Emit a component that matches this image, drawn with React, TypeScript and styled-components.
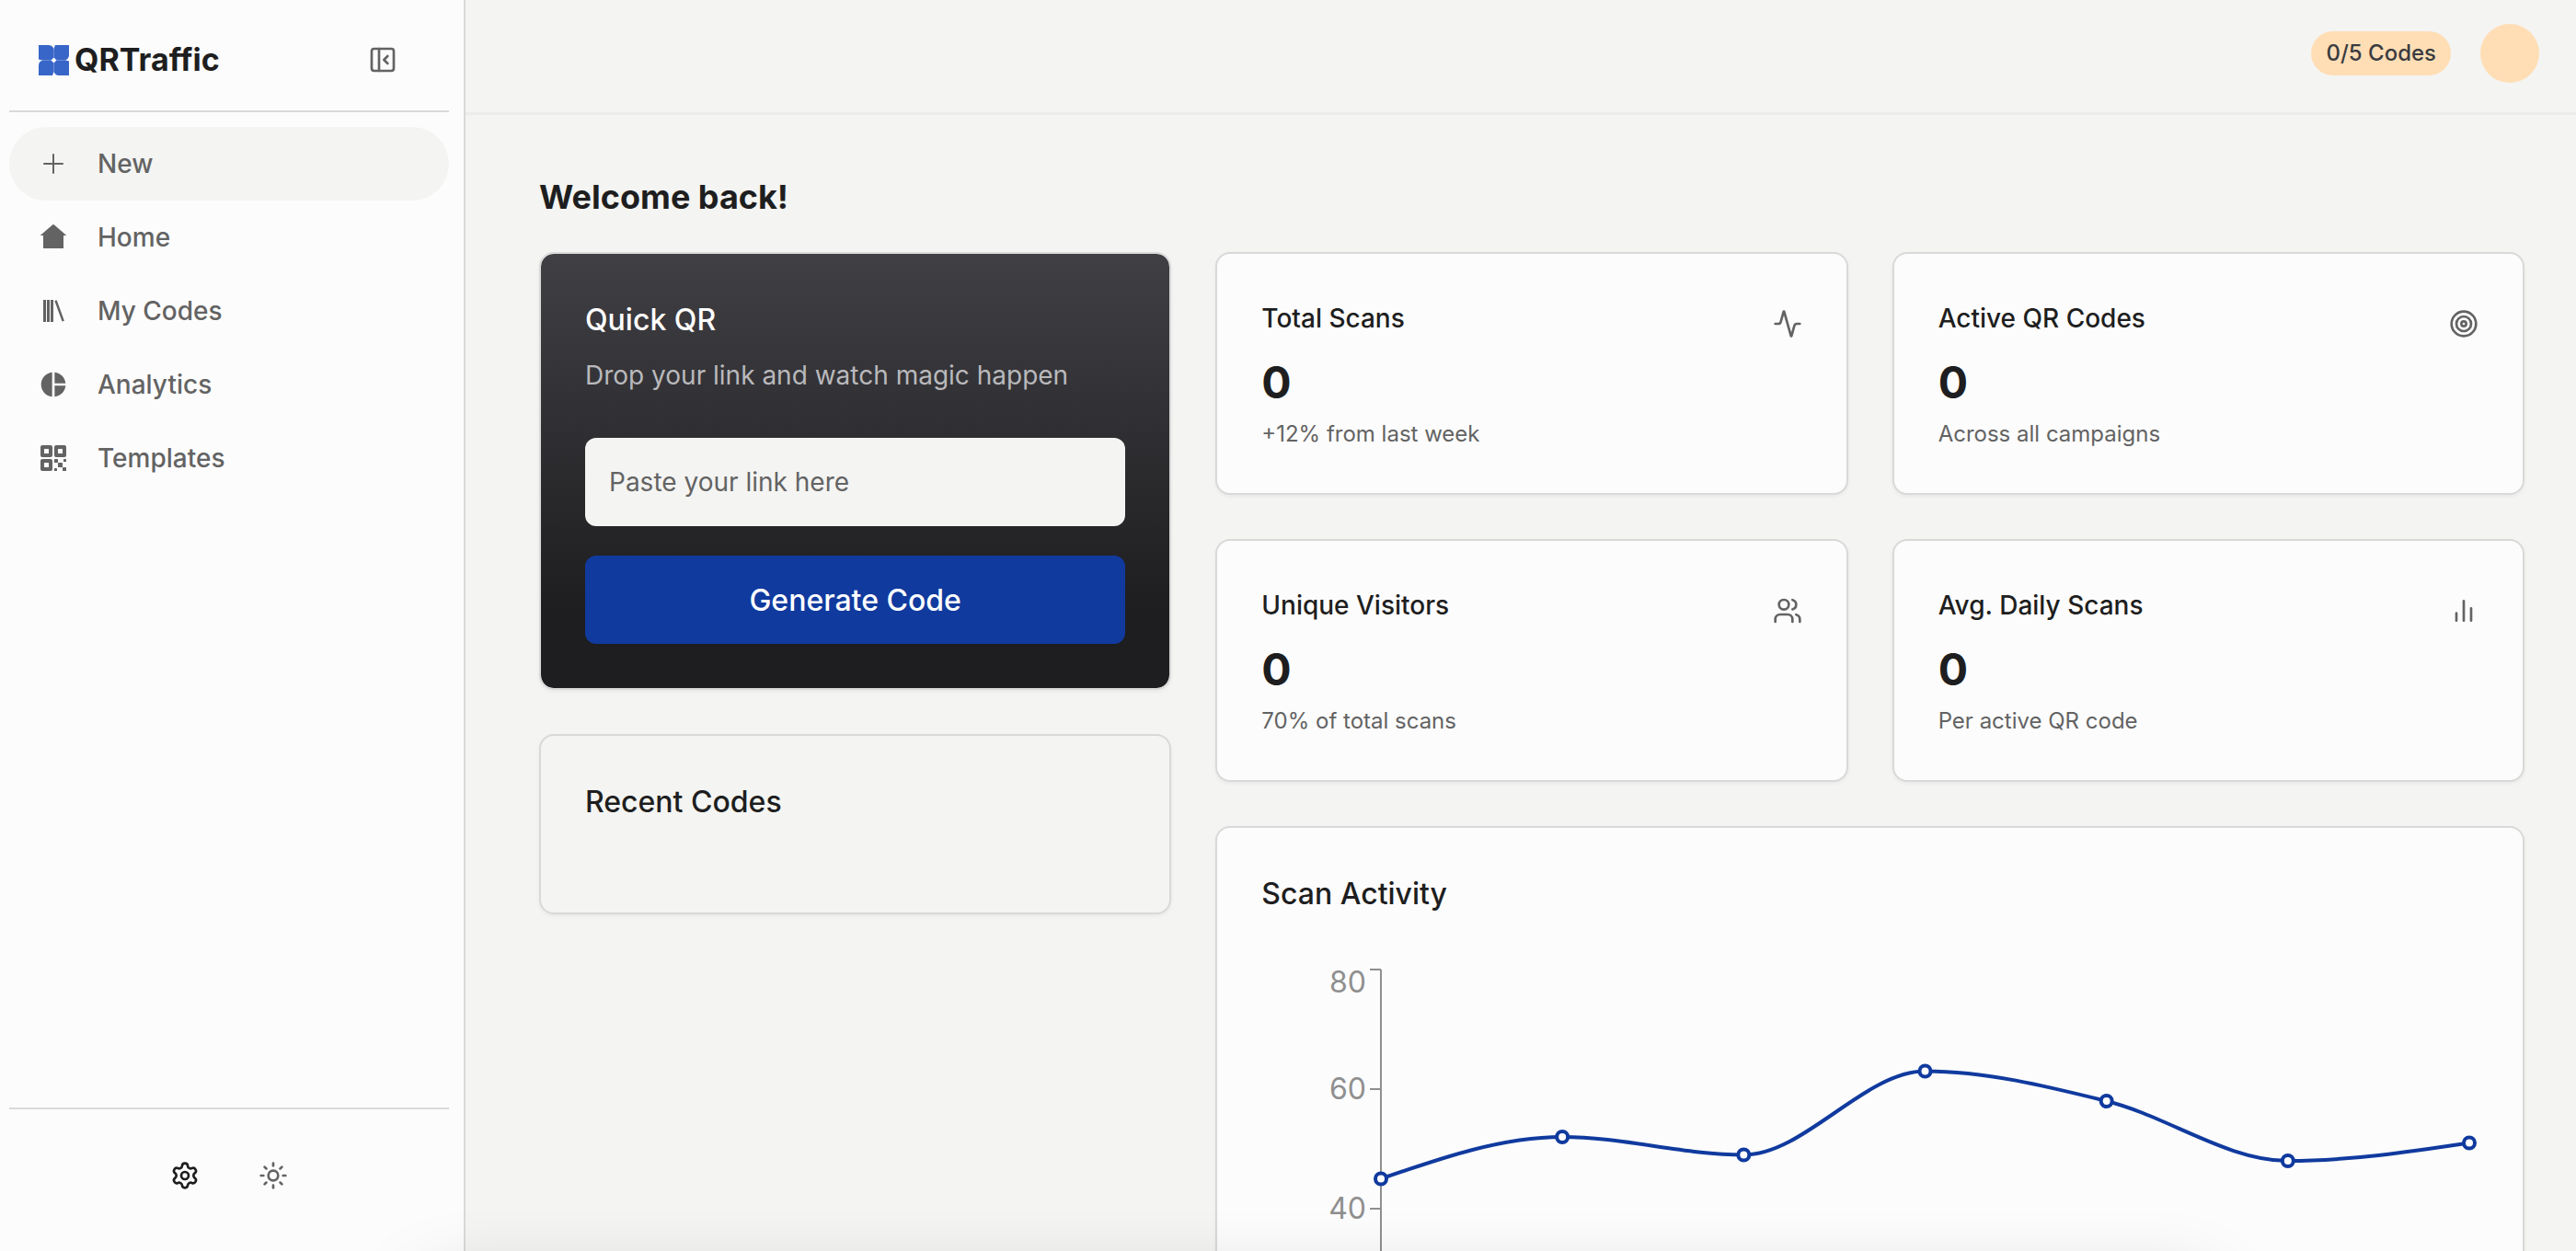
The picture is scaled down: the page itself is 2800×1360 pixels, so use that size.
import React, { useLayoutEffect, useRef, useState } from 'react';
import styled, { createGlobalStyle } from 'styled-components';
import { Activity, PanelLeftClose, Settings, Sun, Users } from 'lucide-react';
import { IoQrCode } from 'react-icons/io5';
import { MdPieChart } from 'react-icons/md';

const color = {
  page: '#f4f4f2',
  surface: '#fcfcfc',
  line: '#d9d9d9',
  hairline: '#ebebea',
  ink: '#1e1e20',
  muted: '#636363',
  axis: '#8f8f8f',
  brand: '#103a9e',
  logo: '#3866c8',
  peach: '#ffdeb5',
};

const GlobalStyle = createGlobalStyle`
  *, *::before, *::after { box-sizing: border-box; }
  body {
    margin: 0;
    background: ${color.page};
    color: ${color.ink};
    font-family: Inter, "Liberation Sans", sans-serif;
  }
  h1, h2, p { margin: 0; padding: 0; }
  button, input { font: inherit; }
`;

const Shell = styled.div`
  display: flex;
  height: 100vh;
  overflow: hidden;
`;

const Sidebar = styled.aside`
  display: flex;
  flex: none;
  flex-direction: column;
  width: 506px;
  padding: 0 16px 0 10px;
  background: ${color.surface};
  border-right: 2px solid ${color.line};
`;

const Brand = styled.div`
  display: flex;
  align-items: center;
  justify-content: space-between;
  height: 122px;
  padding: 10px 48px 0 32px;
  border-bottom: 2px solid ${color.line};
`;

const Logo = styled.a`
  display: flex;
  align-items: center;
  gap: 6px;
  color: ${color.ink};
  font-size: 34px;
  font-weight: 700;
  line-height: 48px;
  text-decoration: none;
`;

const IconButton = styled.button<{ $size: number; $dark?: boolean }>`
  display: grid;
  place-items: center;
  width: ${(p) => p.$size}px;
  height: ${(p) => p.$size}px;
  padding: 0;
  border: 0;
  background: none;
  color: ${(p) => (p.$dark ? color.ink : color.muted)};
`;

const Nav = styled.nav`
  flex: 1;
  padding-top: 16px;
`;

const NavItem = styled.a<{ $active?: boolean }>`
  display: flex;
  align-items: center;
  gap: 32px;
  height: 80px;
  padding: 0 32px;
  border-radius: 40px;
  background: ${(p) => (p.$active ? color.page : 'transparent')};
  color: ${color.muted};
  font-size: 28px;
  font-weight: 500;
  line-height: 40px;
  text-decoration: none;
`;

const SidebarFooter = styled.div`
  display: flex;
  justify-content: center;
  gap: 32px;
  padding: 40px 0 50px;
  border-top: 2px solid ${color.line};
`;

const Column = styled.div`
  display: flex;
  flex: 1;
  flex-direction: column;
  min-width: 0;
`;

const TopBar = styled.header`
  display: flex;
  flex: none;
  align-items: center;
  justify-content: flex-end;
  gap: 32px;
  height: 124px;
  padding: 0 40px 6px 0;
  border-bottom: 2px solid ${color.hairline};
  box-shadow: 0 1px 0 ${color.hairline};
`;

const Quota = styled.span`
  padding: 8px 16px;
  border-radius: 24px;
  background: ${color.peach};
  color: #3a3b40;
  font-size: 24px;
  font-weight: 500;
  line-height: 32px;
`;

const Avatar = styled.button`
  width: 64px;
  height: 64px;
  padding: 0;
  border: 0;
  border-radius: 50%;
  background: ${color.peach};
`;

const Main = styled.main`
  flex: 1;
  min-height: 0;
  padding: 66px 56px 64px 80px;
  overflow-y: auto;
  scrollbar-width: none;
`;

const Welcome = styled.h1`
  margin-bottom: 36px;
  font-size: 36px;
  font-weight: 700;
  line-height: 48px;
`;

const Dashboard = styled.div`
  display: grid;
  grid-template-columns: repeat(3, minmax(0, 1fr));
  gap: 48px;
  align-items: start;
`;

const Stack = styled.div`
  display: flex;
  flex-direction: column;
  gap: 48px;
`;

const Insights = styled.div`
  display: grid;
  grid-column: span 2;
  grid-template-columns: repeat(2, minmax(0, 1fr));
  gap: 48px;
`;

const Card = styled.section`
  padding: 48px;
  border: 2px solid ${color.line};
  border-radius: 16px;
  background: ${color.surface};
  box-shadow: 0 2px 4px rgba(0, 0, 0, 0.05);
`;

const QuickCard = styled(Card)`
  background: linear-gradient(#403f44, ${color.ink} 82%) padding-box;
  color: #fff;
`;

const RecentCard = styled(Card)`
  padding-bottom: 96px;
  background: ${color.page};
`;

const ChartCard = styled(Card)`
  grid-column: span 2;
`;

const CardTitle = styled.h2`
  font-size: 32px;
  font-weight: 500;
  line-height: 48px;
`;

const Hint = styled.p`
  margin-top: 16px;
  color: #b9b9bc;
  font-size: 28px;
  line-height: 40px;
`;

const QuickForm = styled.form`
  display: grid;
  gap: 32px;
  margin-top: 48px;
`;

const LinkInput = styled.input`
  width: 100%;
  height: 96px;
  padding: 0 26px;
  border: 0;
  border-radius: 12px;
  background: ${color.page};
  color: ${color.ink};
  font-size: 28px;
  &::placeholder { color: ${color.muted}; opacity: 1; }
`;

const GenerateButton = styled.button`
  height: 96px;
  border: 0;
  border-radius: 12px;
  background: ${color.brand};
  color: #fff;
  font-size: 32px;
  font-weight: 500;
`;

const StatCard = styled(Card)`
  display: flex;
  justify-content: space-between;
`;

const StatLabel = styled.h2`
  font-size: 28px;
  font-weight: 500;
  line-height: 44px;
`;

const StatValue = styled.p`
  margin-top: 16px;
  font-size: 48px;
  font-weight: 700;
  line-height: 64px;
`;

const StatNote = styled.p`
  margin-top: 8px;
  color: ${color.muted};
  font-size: 24px;
  line-height: 32px;
`;

const StatIcon = styled.div`
  padding-top: 12px;
  color: ${color.muted};
  line-height: 0;
`;

const ChartFrame = styled.div`
  height: 600px;
  margin-top: 48px;
  svg { display: block; width: 100%; height: 100%; }
`;

const TickText = styled.text`
  fill: ${color.axis};
  font-size: 32px;
  text-anchor: end;
`;

const DockShade = styled.div`
  position: fixed;
  right: 400px;
  bottom: -80px;
  left: 460px;
  height: 40px;
  border-radius: 20px;
  box-shadow: 0 0 80px rgba(0, 0, 0, 0.25);
  pointer-events: none;
`;

const LogoMark = () => (
  <svg width="33" height="33" viewBox="0 0 33 33" fill={color.logo} aria-hidden="true">
    <path d="M0 0H11A5.500 5.500 0 0 1 16.500 5.500V13.500L13.500 16.500H3.500L0 15.500Z" />
    <path d="M33 0V11A5.500 5.500 0 0 1 27.500 16.500H19.500L16.500 13.500V4L18 0Z" />
    <path d="M33 33H22A5.500 5.500 0 0 1 16.500 27.500V19.500L19.500 16.500H29.500L33 17.500Z" />
    <path d="M0 33V22A5.500 5.500 0 0 1 5.500 16.500H13.500L16.500 19.500V29L15 33Z" />
  </svg>
);

const PlusIcon = () => (
  <svg width="32" height="32" viewBox="0 0 24 24" fill="none" stroke="currentColor" strokeWidth="1.5" strokeLinecap="round" aria-hidden="true">
    <path d="M12 4.5v15M4.500 12h15" />
  </svg>
);

const HomeIcon = () => (
  <svg width="32" height="32" viewBox="0 0 32 32" fill="currentColor" aria-hidden="true">
    <path d="M15 2.400a1.500 1.500 0 0 1 2 0L30.300 14H27v14H5V14H1.700z" />
  </svg>
);

const LibraryIcon = () => (
  <svg width="32" height="32" viewBox="0 0 32 32" fill="currentColor" aria-hidden="true">
    <path d="M5 4h3v24H5zM9 4h3v24H9zM13 4h3v24h-3zM17.300 5l2.400-.8 8.200 22.600-2.400.8z" />
  </svg>
);

const BarsIcon = () => (
  <svg width="32" height="32" viewBox="0 0 24 24" fill="none" stroke="currentColor" strokeWidth="2" strokeLinecap="round" aria-hidden="true">
    <path d="M6 20v-6M12 20V4M18 20V10" />
  </svg>
);

const TargetIcon = () => (
  <svg width="32" height="32" viewBox="0 0 24 24" fill="none" stroke="currentColor" strokeWidth="2" aria-hidden="true">
    <circle cx="12" cy="12" r="10" />
    <circle cx="12" cy="12" r="6" />
    <circle cx="12" cy="12" r="2" />
  </svg>
);

const navItems = [
  { label: 'New', icon: <PlusIcon />, active: true },
  { label: 'Home', icon: <HomeIcon /> },
  { label: 'My Codes', icon: <LibraryIcon /> },
  { label: 'Analytics', icon: <MdPieChart size={32} /> },
  { label: 'Templates', icon: <IoQrCode size={32} /> },
];

const stats = [
  { label: 'Total Scans', value: 0, note: '+12% from last week', icon: <Activity size={32} /> },
  { label: 'Active QR Codes', value: 0, note: 'Across all campaigns', icon: <TargetIcon /> },
  { label: 'Unique Visitors', value: 0, note: '70% of total scans', icon: <Users size={32} /> },
  { label: 'Avg. Daily Scans', value: 0, note: 'Per active QR code', icon: <BarsIcon /> },
];

const scans = [45, 52, 49, 63, 58, 48, 51];
const ticks = [80, 60, 40];
const plot = { left: 130, right: 10, top: 10, bottom: 530, max: 80 };

type Point = { x: number; y: number };

/* Monotone cubic interpolation, so the line never overshoots a data point. */
function monotonePath(pts: Point[]): string {
  const slope = pts.slice(1).map((p, i) => (p.y - pts[i].y) / (p.x - pts[i].x));
  const last = pts.length - 1;
  const m = pts.map((_, i) => {
    if (i === 0 || i === last) return 0;
    const a = slope[i - 1];
    const b = slope[i];
    if (a * b <= 0) return 0;
    return Math.sign(a) * Math.min(Math.abs(a), Math.abs(b), Math.abs(a + b) / 4) * 2;
  });
  m[0] = (3 * slope[0] - m[1]) / 2;
  m[last] = (3 * slope[last - 1] - m[last - 1]) / 2;
  return pts.slice(1).reduce((d, p, i) => {
    const q = pts[i];
    const dx = (p.x - q.x) / 3;
    return `${d}C${q.x + dx},${q.y + dx * m[i]} ${p.x - dx},${p.y - dx * m[i + 1]} ${p.x},${p.y}`;
  }, `M${pts[0].x},${pts[0].y}`);
}

function ScanChart() {
  const frame = useRef<HTMLDivElement>(null);
  const [width, setWidth] = useState(1320);

  useLayoutEffect(() => {
    const node = frame.current;
    if (!node) return;
    const measure = () => setWidth(node.clientWidth);
    measure();
    const observer = new ResizeObserver(measure);
    observer.observe(node);
    return () => observer.disconnect();
  }, []);

  const yOf = (v: number) => plot.bottom - (v / plot.max) * (plot.bottom - plot.top);
  const step = (width - plot.left - plot.right) / (scans.length - 1);
  const points = scans.map((v, i) => ({ x: plot.left + i * step, y: yOf(v) }));

  return (
    <ChartFrame ref={frame}>
      <svg role="img" aria-label="Scan Activity">
        <g stroke={color.axis} strokeWidth="2">
          <line x1={plot.left} x2={plot.left} y1={plot.top} y2={plot.bottom} />
          {ticks.map((t) => (
            <line key={t} x1={plot.left - 12} x2={plot.left} y1={yOf(t)} y2={yOf(t)} />
          ))}
        </g>
        {ticks.map((t) => (
          <TickText key={t} x={plot.left - 16} y={Math.max(yOf(t) + 11, 35)}>{t}</TickText>
        ))}
        <path d={monotonePath(points)} fill="none" stroke={color.brand} strokeWidth="4" />
        {points.map((p) => (
          <circle key={p.x} cx={p.x} cy={p.y} r="6" fill="#fff" stroke={color.brand} strokeWidth="4" />
        ))}
      </svg>
    </ChartFrame>
  );
}

export default function App() {
  return (
    <>
      <GlobalStyle />
      <Shell>
        <Sidebar>
          <Brand>
            <Logo href="#">
              <LogoMark />
              QRTraffic
            </Logo>
            <IconButton type="button" $size={48} aria-label="Collapse sidebar">
              <PanelLeftClose size={32} />
            </IconButton>
          </Brand>
          <Nav>
            {navItems.map((item) => (
              <NavItem key={item.label} href="#" $active={item.active}>
                {item.icon}
                {item.label}
              </NavItem>
            ))}
          </Nav>
          <SidebarFooter>
            <IconButton type="button" $size={64} $dark aria-label="Settings">
              <Settings size={32} />
            </IconButton>
            <IconButton type="button" $size={64} aria-label="Toggle theme">
              <Sun size={32} />
            </IconButton>
          </SidebarFooter>
        </Sidebar>

        <Column>
          <TopBar>
            <Quota>0/5 Codes</Quota>
            <Avatar type="button" aria-label="Account" />
          </TopBar>
          <Main>
            <Welcome>Welcome back!</Welcome>
            <Dashboard>
              <Stack>
                <QuickCard>
                  <CardTitle>Quick QR</CardTitle>
                  <Hint>Drop your link and watch magic happen</Hint>
                  <QuickForm onSubmit={(e) => e.preventDefault()}>
                    <LinkInput type="url" aria-label="Link" placeholder="Paste your link here" />
                    <GenerateButton type="submit">Generate Code</GenerateButton>
                  </QuickForm>
                </QuickCard>
                <RecentCard>
                  <CardTitle>Recent Codes</CardTitle>
                </RecentCard>
              </Stack>
              <Insights>
                {stats.map((s) => (
                  <StatCard key={s.label}>
                    <div>
                      <StatLabel>{s.label}</StatLabel>
                      <StatValue>{s.value}</StatValue>
                      <StatNote>{s.note}</StatNote>
                    </div>
                    <StatIcon>{s.icon}</StatIcon>
                  </StatCard>
                ))}
                <ChartCard>
                  <CardTitle>Scan Activity</CardTitle>
                  <ScanChart />
                </ChartCard>
              </Insights>
            </Dashboard>
          </Main>
        </Column>
      </Shell>
      <DockShade />
    </>
  );
}
